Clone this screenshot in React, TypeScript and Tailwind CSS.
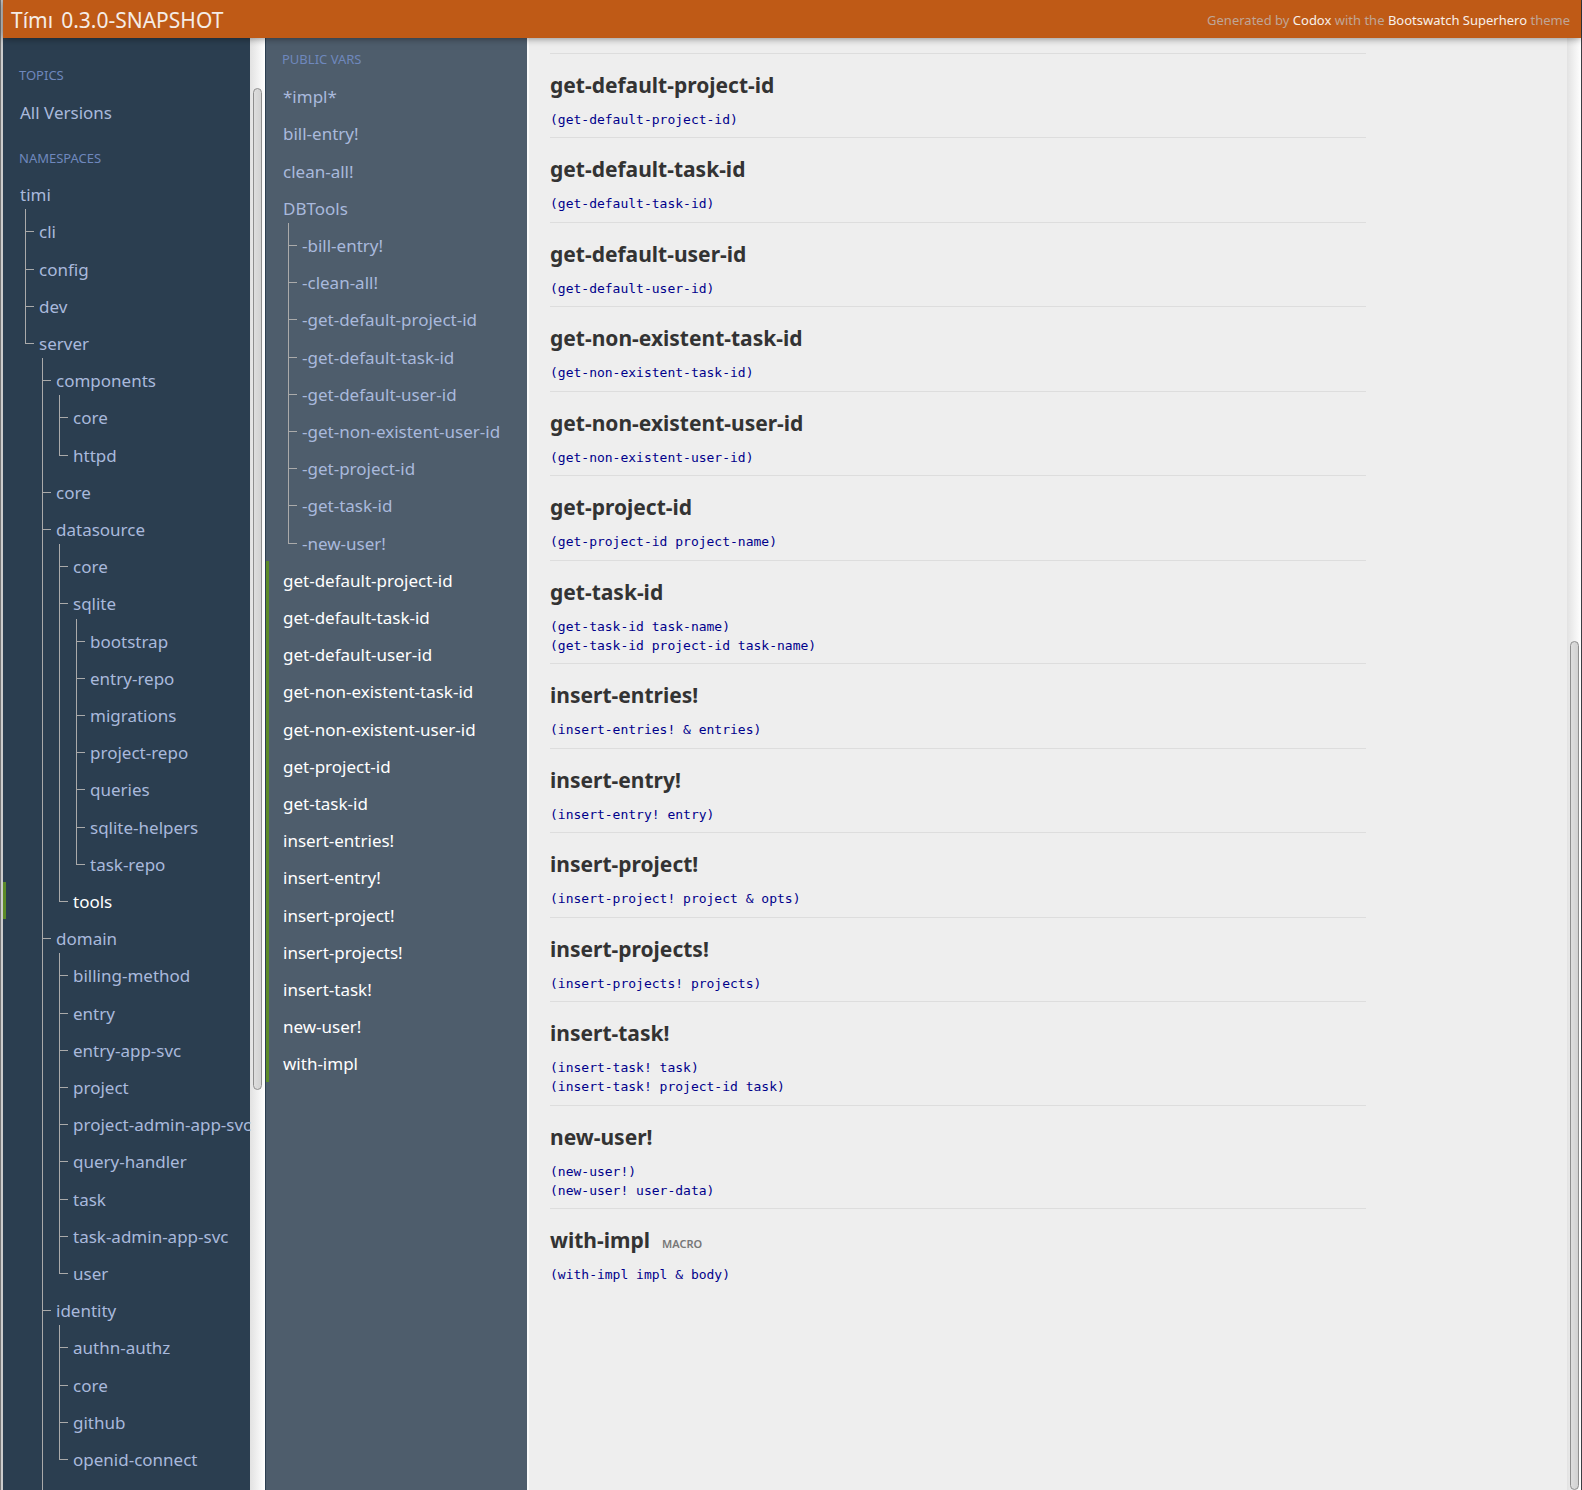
import React from "react";

type Item = { name: string; depth: number; current?: boolean };

const namespaces: Item[] = [
  { name: "timi", depth: 0 },
  { name: "cli", depth: 1 },
  { name: "config", depth: 1 },
  { name: "dev", depth: 1 },
  { name: "server", depth: 1 },
  { name: "components", depth: 2 },
  { name: "core", depth: 3 },
  { name: "httpd", depth: 3 },
  { name: "core", depth: 2 },
  { name: "datasource", depth: 2 },
  { name: "core", depth: 3 },
  { name: "sqlite", depth: 3 },
  { name: "bootstrap", depth: 4 },
  { name: "entry-repo", depth: 4 },
  { name: "migrations", depth: 4 },
  { name: "project-repo", depth: 4 },
  { name: "queries", depth: 4 },
  { name: "sqlite-helpers", depth: 4 },
  { name: "task-repo", depth: 4 },
  { name: "tools", depth: 3, current: true },
  { name: "domain", depth: 2 },
  { name: "billing-method", depth: 3 },
  { name: "entry", depth: 3 },
  { name: "entry-app-svc", depth: 3 },
  { name: "project", depth: 3 },
  { name: "project-admin-app-svc", depth: 3 },
  { name: "query-handler", depth: 3 },
  { name: "task", depth: 3 },
  { name: "task-admin-app-svc", depth: 3 },
  { name: "user", depth: 3 },
  { name: "identity", depth: 2 },
  { name: "authn-authz", depth: 3 },
  { name: "core", depth: 3 },
  { name: "github", depth: 3 },
  { name: "openid-connect", depth: 3 },
  { name: "", depth: 2 },
];

const publicVars: Item[] = [
  { name: "*impl*", depth: 0 },
  { name: "bill-entry!", depth: 0 },
  { name: "clean-all!", depth: 0 },
  { name: "DBTools", depth: 0 },
  { name: "-bill-entry!", depth: 1 },
  { name: "-clean-all!", depth: 1 },
  { name: "-get-default-project-id", depth: 1 },
  { name: "-get-default-task-id", depth: 1 },
  { name: "-get-default-user-id", depth: 1 },
  { name: "-get-non-existent-user-id", depth: 1 },
  { name: "-get-project-id", depth: 1 },
  { name: "-get-task-id", depth: 1 },
  { name: "-new-user!", depth: 1 },
  { name: "get-default-project-id", depth: 0, current: true },
  { name: "get-default-task-id", depth: 0, current: true },
  { name: "get-default-user-id", depth: 0, current: true },
  { name: "get-non-existent-task-id", depth: 0, current: true },
  { name: "get-non-existent-user-id", depth: 0, current: true },
  { name: "get-project-id", depth: 0, current: true },
  { name: "get-task-id", depth: 0, current: true },
  { name: "insert-entries!", depth: 0, current: true },
  { name: "insert-entry!", depth: 0, current: true },
  { name: "insert-project!", depth: 0, current: true },
  { name: "insert-projects!", depth: 0, current: true },
  { name: "insert-task!", depth: 0, current: true },
  { name: "new-user!", depth: 0, current: true },
  { name: "with-impl", depth: 0, current: true },
];

const docs: { name: string; usage: string[]; macro?: boolean }[] = [
  { name: "get-default-project-id", usage: ["(get-default-project-id)"] },
  { name: "get-default-task-id", usage: ["(get-default-task-id)"] },
  { name: "get-default-user-id", usage: ["(get-default-user-id)"] },
  { name: "get-non-existent-task-id", usage: ["(get-non-existent-task-id)"] },
  { name: "get-non-existent-user-id", usage: ["(get-non-existent-user-id)"] },
  { name: "get-project-id", usage: ["(get-project-id project-name)"] },
  { name: "get-task-id", usage: ["(get-task-id task-name)", "(get-task-id project-id task-name)"] },
  { name: "insert-entries!", usage: ["(insert-entries! & entries)"] },
  { name: "insert-entry!", usage: ["(insert-entry! entry)"] },
  { name: "insert-project!", usage: ["(insert-project! project & opts)"] },
  { name: "insert-projects!", usage: ["(insert-projects! projects)"] },
  { name: "insert-task!", usage: ["(insert-task! task)", "(insert-task! project-id task)"] },
  { name: "new-user!", usage: ["(new-user!)", "(new-user! user-data)"] },
  { name: "with-impl", usage: ["(with-impl impl & body)"], macro: true },
];

/** True when a later row continues the branch at the given depth. */
function continues(items: Item[], index: number, depth: number) {
  for (let i = index + 1; i < items.length; i++) {
    if (items[i].depth === depth) return true;
    if (items[i].depth < depth) return false;
  }
  return false;
}

function Tree({ items }: { items: Item[] }) {
  return (
    <ul>
      {items.map((item, i) => {
        const first = i > 0 && items[i - 1].depth < item.depth;
        const ancestors = Array.from({ length: Math.max(item.depth - 1, 0) }, (_, d) => d + 1);
        return (
          <li
            key={i}
            className={`flex h-[37px] border-l-[3px] nth-[5n+2]:h-[38px] ${
              item.current ? "border-[#5b8a28]" : "border-transparent"
            } ${item.depth ? "pl-[19px]" : "pl-[14px]"}`}
          >
            {ancestors.map((d) => (
              <span
                key={d}
                className={`w-[17px] shrink-0 border-l ${
                  continues(items, i, d) ? "border-[#aaa]" : "border-transparent"
                }`}
              />
            ))}
            {item.depth > 0 && (
              <span className={`flex w-[14px] shrink-0 flex-col ${first ? "-mt-[3px]" : ""}`}>
                <span
                  className={`w-[9px] border-b border-l border-[#aaa] ${first ? "h-[23px]" : "h-[20px]"}`}
                />
                {continues(items, i, item.depth) && <span className="grow border-l border-[#aaa]" />}
              </span>
            )}
            {item.name && (
              <a
                href={`#${item.name}`}
                className={`text-[17px] leading-[39px] whitespace-nowrap ${
                  item.current ? "text-white" : "text-[#a9b9dc]"
                }`}
              >
                {item.name}
              </a>
            )}
          </li>
        );
      })}
    </ul>
  );
}

function SideHeading({ children }: { children: React.ReactNode }) {
  return <h3 className="pl-[16px] text-[13px] leading-[18px] text-[#6f88bd] uppercase">{children}</h3>;
}

export default function App() {
  return (
    <div className="flex h-screen border-l border-[#777] bg-[#ccc] pl-[2px] font-['Noto_Sans',sans-serif]">
      <div className="flex min-w-0 grow flex-col border-r border-[#3b3d44]">
        <header className="relative z-10 flex h-[38px] shrink-0 items-center justify-between bg-[#bf5a16] pt-[2px] pr-[11px] pl-[8px] shadow-[0_0_8px_rgba(0,0,0,0.5)]">
          <h1 className="flex gap-[8px] text-[21px] leading-[36px] text-[#f5ece6]">
            <a href="#index">Tímı</a>
            <span>0.3.0-SNAPSHOT</span>
          </h1>
          <p className="text-[13px] leading-[36px] text-[#bfa696]">
            Generated by{" "}
            <a href="#codox" className="text-[#f8f0ea]">
              Codox
            </a>{" "}
            with the{" "}
            <a href="#superhero" className="text-[#f8f0ea]">
              Bootswatch Superhero
            </a>{" "}
            theme
          </p>
        </header>

        <div className="flex min-h-0 grow">
          <nav
            aria-label="Namespaces"
            className="relative z-[1] w-[247px] shrink-0 overflow-y-clip bg-[#2b3e50] pt-[28px]"
          >
            <SideHeading>Topics</SideHeading>
            <div className="pt-[9px] pb-[19px]">
              <Tree items={[{ name: "All Versions", depth: 0 }]} />
            </div>
            <SideHeading>Namespaces</SideHeading>
            <div className="pt-[8px]">
              <Tree items={namespaces} />
            </div>
          </nav>
          <div className="flex w-[15px] shrink-0 flex-col bg-linear-to-r from-[#e2e2e2] to-white px-[3px]">
            <div className="flex-[50]" />
            <div className="flex-[1001] rounded-full border border-[#8e8e8e] bg-linear-to-r from-[#dedede] to-[#d2d2d2]" />
            <div className="flex-[401]" />
          </div>

          <nav
            aria-label="Public vars"
            className="w-[262px] shrink-0 overflow-hidden border-l border-[#2b3e50] bg-[#4e5d6c] pt-[12px]"
          >
            <SideHeading>Public Vars</SideHeading>
            <div className="pt-[9px]">
              <Tree items={publicVars} />
            </div>
          </nav>

          <main className="min-w-0 grow overflow-hidden border-l-2 border-[#fafafa] bg-[#eee] pt-[15px] pl-[21px]">
            <div className="max-w-[816px]">
              {docs.map((doc) => (
                <section key={doc.name} className="border-t border-[#ddd] pb-[8px] nth-[2n]:pb-[9px]">
                  <h3 className="flex items-baseline gap-[12px] pt-[15px] pb-[9px] text-[21px] leading-[32px] font-bold text-[#333]">
                    {doc.name}
                    {doc.macro && (
                      <small className="text-[11px] leading-[16px] font-semibold text-[#777]">MACRO</small>
                    )}
                  </h3>
                  {doc.usage.map((line) => (
                    <code
                      key={line}
                      className="block font-['DejaVu_Sans_Mono',monospace] text-[13px] leading-[19px] text-[#00008b]"
                    >
                      {line}
                    </code>
                  ))}
                </section>
              ))}
            </div>
          </main>
          <div className="flex w-[14px] shrink-0 flex-col bg-linear-to-r from-[#e2e2e2] to-white pr-[2px] pl-[3px]">
            <div className="flex-[603]" />
            <div className="flex-[848] rounded-full border border-[#8e8e8e] bg-linear-to-r from-[#dedede] to-[#d2d2d2]" />
          </div>
        </div>
      </div>
    </div>
  );
}
